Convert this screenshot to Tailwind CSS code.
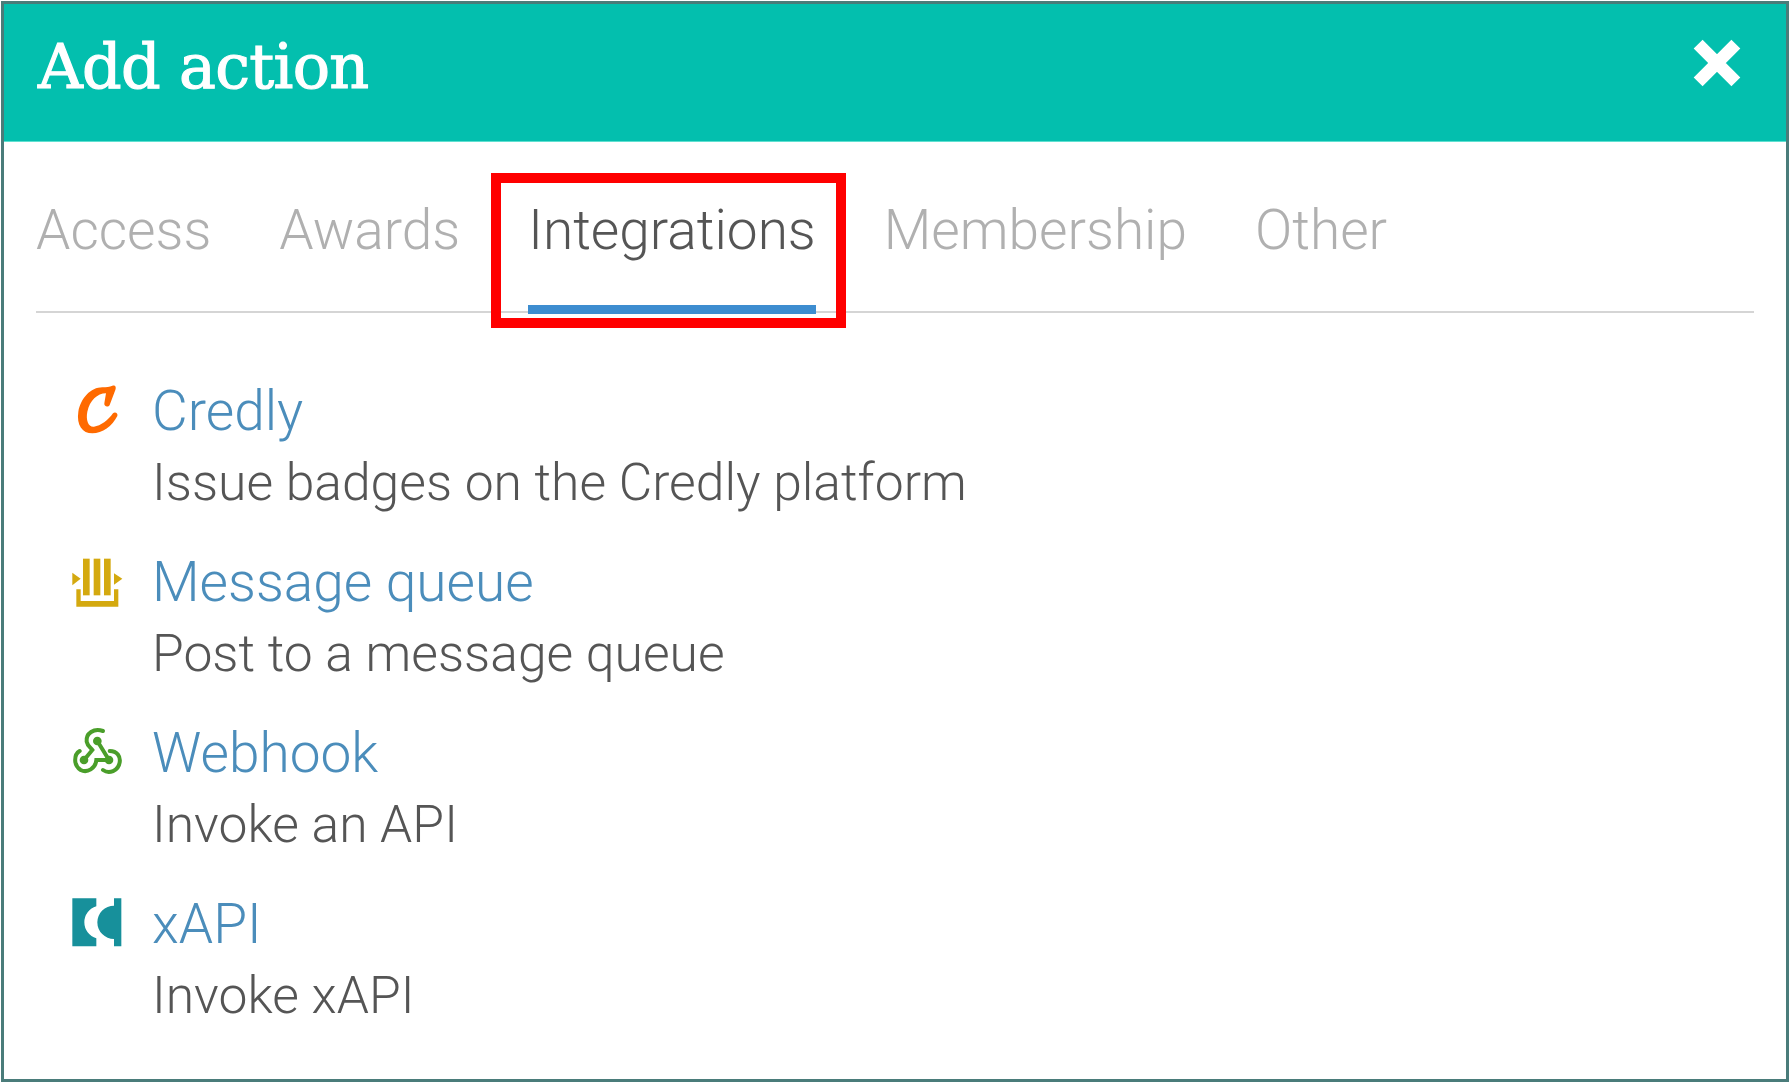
<!DOCTYPE html>
<html lang="en">
<head>
  <meta charset="UTF-8">
  <title>Add action</title>
  <script src="https://cdn.jsdelivr.net/npm/@tailwindcss/browser@4"></script>
</head>
<body class="bg-white font-['Roboto',sans-serif]">

  <div class="m-px w-[1788px] h-[1081px] border-[3px] border-[#4a7c7a] bg-white overflow-hidden">

    <!-- Header -->
    <header class="h-[138px] bg-[#03bfae] border-b border-[#5fe0d0] flex justify-between items-center pl-[34px] pr-[45px]">
      <h1 class="font-['DejaVu_Serif',serif] text-[62px] leading-none font-normal text-white -tracking-[0.7px] -mt-[12px] [-webkit-text-stroke:1.2px_white]">Add action</h1>
      <button aria-label="Close" class="block -mt-[20px]">
        <svg class="block w-[48px] h-[48px]" viewBox="0 0 48 48">
          <path d="M8 8 L40 40 M40 8 L8 40" stroke="#fff" stroke-width="14" stroke-linecap="square" fill="none" transform="translate(24 24) scale(.9) translate(-24 -24)"/>
        </svg>
      </button>
    </header>

    <!-- Tabs -->
    <nav class="mx-[32px] border-b-2 border-[#d5d5d5]">
      <ul class="flex gap-[68px] pt-[53px] text-[55px] leading-[70px] font-light text-[#b0b0b0]">
        <li class="pb-[40px] border-b-[9px] border-transparent -mb-[3px]">Access</li>
        <li class="pb-[40px] border-b-[9px] border-transparent -mb-[3px]">Awards</li>
        <li class="relative pb-[40px] border-b-[9px] border-[#3d8dd0] -mb-[3px] text-[#555]">
          Integrations
          <span class="absolute -left-[37px] -right-[30px] -top-[22px] -bottom-[23px] border-[10px] border-[#ff0000]"></span>
        </li>
        <li class="pb-[40px] border-b-[9px] border-transparent -mb-[3px]">Membership</li>
        <li class="pb-[40px] border-b-[9px] border-transparent -mb-[3px]">Other</li>
      </ul>
    </nav>

    <!-- Actions -->
    <ul class="mt-[62px] pl-[55px] flex flex-col gap-[28px] text-[51.6px] leading-[70px] font-light">
      <li class="flex gap-[3px]">
        <svg class="shrink-0 w-[90px] h-[70px]" viewBox="0 15 270 210">
          <path fill="#ff6a00" d="M175 138 C160 168 130 190 100 190 C70 190 52 165 58 125 C65 85 95 52 130 52 C142 52 152 50 160 47 C170 44 172 52 169 60 L152 105 C148 113 134 110 136 100 L141 70 C115 70 92 92 85 125 C80 150 88 172 105 170 C125 168 148 150 162 130 C168 124 178 130 175 138 Z"/>
        </svg>
        <div>
          <a class="block text-[55px] leading-[73px] text-[#4b8dbb]">Credly</a>
          <p class="text-[#555]">Issue badges on the Credly platform</p>
        </div>
      </li>
      <li class="flex gap-[3px]">
        <svg class="shrink-0 w-[90px] h-[70px]" viewBox="0 0 270 210" fill="#d4a90f">
          <rect x="72" y="38" width="20" height="110"/>
          <rect x="104" y="38" width="20" height="110"/>
          <rect x="135" y="38" width="20" height="110"/>
          <path d="M52 130 H65 V165 H165 V130 H178 V182 H52 Z"/>
          <path d="M40 80 L65 98 L40 118 Z"/>
          <path d="M165 82 L190 98 L165 116 Z"/>
        </svg>
        <div>
          <a class="block text-[55px] leading-[73px] text-[#4b8dbb]">Message queue</a>
          <p class="text-[#555]">Post to a message queue</p>
        </div>
      </li>
      <li class="flex gap-[3px]">
        <svg class="shrink-0 w-[90px] h-[70px]" viewBox="0 6 270 210">
          <g fill="none" stroke="#4a9e2a" stroke-width="12" stroke-linecap="round">
            <path d="M132 48 C105 38 80 55 83 80 C85 92 95 98 100 105 L75 135"/>
            <path d="M115 78 L150 135 L112 135 C110 160 85 175 65 165 C42 150 45 118 62 108"/>
            <path d="M152 108 C175 108 185 125 182 142 C178 168 150 178 132 165"/>
          </g>
          <g fill="#4a9e2a">
            <circle cx="115" cy="78" r="13"/>
            <circle cx="75" cy="135" r="13"/>
            <circle cx="150" cy="135" r="13"/>
          </g>
        </svg>
        <div>
          <a class="block text-[55px] leading-[73px] text-[#4b8dbb]">Webhook</a>
          <p class="text-[#555]">Invoke an API</p>
        </div>
      </li>
      <li class="flex gap-[3px]">
        <svg class="shrink-0 w-[90px] h-[70px]" viewBox="0 -3 270 210" fill="#17909b">
          <path d="M40 28 H112 V52 A50 50 0 0 0 112 148 V172 H40 Z"/>
          <path d="M187 28 H165 V50 A50 50 0 0 0 165 150 V172 H187 Z"/>
        </svg>
        <div>
          <a class="block text-[55px] leading-[73px] text-[#4b8dbb]">xAPI</a>
          <p class="text-[#555]">Invoke xAPI</p>
        </div>
      </li>
    </ul>
  </div>

</body>
</html>
